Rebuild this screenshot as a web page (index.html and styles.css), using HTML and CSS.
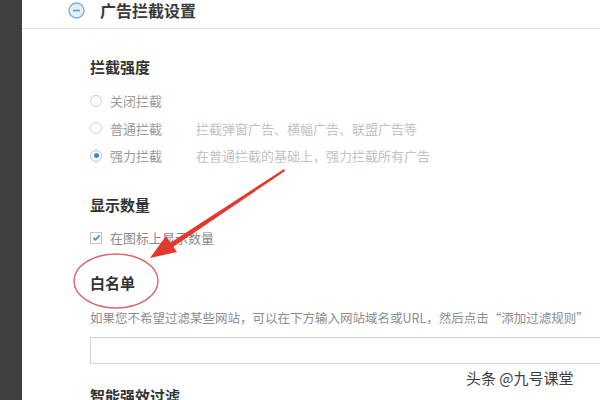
FILE: index.html
```html
<!DOCTYPE html>
<html lang="zh-CN">
<head>
    <meta charset="UTF-8">
    <title>广告拦截设置</title>
    <link rel="stylesheet" href="styles.css">
</head>
<body>
    <div class="page">
        <aside class="sidebar"></aside>

        <main class="panel">
            <header class="panel-header">
                <svg class="collapse-icon" width="17" height="17" viewBox="0 0 17 17">
                    <circle cx="8.5" cy="8.5" r="7.5" fill="#e3eef8" stroke="#7fb0dc" stroke-width="1.4"/>
                    <line x1="5" y1="8.5" x2="12" y2="8.5" stroke="#5f98cc" stroke-width="1.6"/>
                </svg>
                <h1>广告拦截设置</h1>
            </header>

            <section class="settings">
                <h2 class="group-title first">拦截强度</h2>
                <ul class="radio-list">
                    <li class="option">
                        <span class="radio"></span>
                        <span class="option-label">关闭拦截</span>
                    </li>
                    <li class="option">
                        <span class="radio"></span>
                        <span class="option-label">普通拦截</span>
                        <span class="option-desc">拦截弹窗广告、横幅广告、联盟广告等</span>
                    </li>
                    <li class="option">
                        <span class="radio checked"></span>
                        <span class="option-label">强力拦截</span>
                        <span class="option-desc">在普通拦截的基础上，强力拦截所有广告</span>
                    </li>
                </ul>

                <h2 class="group-title">显示数量</h2>
                <div class="check-row">
                    <span class="checkbox">
                        <svg width="9" height="9" viewBox="0 0 9 9">
                            <polyline points="1.5,4.8 3.6,6.8 7.6,2.2" fill="none" stroke="#3d86d6" stroke-width="1.6"/>
                        </svg>
                    </span>
                    <span class="option-label">在图标上显示数量</span>
                </div>

                <h2 class="group-title">白名单</h2>
                <p class="hint">如果您不希望过滤某些网站，可以在下方输入网站域名或URL，然后点击“添加过滤规则”</p>
                <input class="url-input" type="text">

                <h2 class="group-title last">智能强效过滤</h2>
            </section>
        </main>
    </div>

    <svg class="annotation" width="600" height="400" viewBox="0 0 600 400">
        <ellipse cx="116" cy="281" rx="42" ry="27" fill="none" stroke="#d9646a" stroke-width="1.4"/>
        <polygon points="284,169 285,171 173,247 170,243" fill="#e2382e"/>
        <polygon points="150,258 166,236 177,252" fill="#e2382e"/>
    </svg>

    <div class="watermark">头条 @九号课堂</div>
</body>
</html>
```

FILE: styles.css
```css
* {
    margin: 0;
    padding: 0;
    box-sizing: border-box;
}

body {
    width: 600px;
    height: 400px;
    overflow: hidden;
    background: #fff;
    font-family: "Noto Sans CJK SC", "Noto Sans", sans-serif;
    color: #333;
}

.page {
    display: flex;
    height: 400px;
}

/* Dark strip on the left */
.sidebar {
    width: 22px;
    flex-shrink: 0;
    background: #404040;
}

.panel {
    flex: 1;
    overflow: hidden;
}

/* Header */
.panel-header {
    display: flex;
    align-items: center;
    gap: 15px;
    padding: 1px 0 9px 46px;
    border-bottom: 1px solid #e2e2e2;
}

.panel-header h1 {
    font-size: 16px;
    line-height: 18px;
    font-weight: 700;
    color: #3a3a3a;
}

/* Settings body */
.settings {
    padding-left: 68px;
}

.group-title {
    font-size: 15px;
    line-height: 20px;
    font-weight: 700;
    color: #333;
    margin-top: 25px;
}

.group-title.first {
    margin-top: 28px;
}

.group-title.last {
    margin-top: 22px;
}

.radio-list {
    list-style: none;
    margin-top: 10px;
}

.option {
    display: flex;
    align-items: center;
    height: 27.5px;
    font-size: 13px;
}

.radio {
    width: 12px;
    height: 12px;
    border: 1px solid #cfcfcf;
    border-radius: 50%;
    margin-right: 8px;
    display: flex;
    align-items: center;
    justify-content: center;
}

.radio.checked {
    border-color: #a9c8e8;
}

.radio.checked::after {
    content: "";
    width: 5px;
    height: 5px;
    border-radius: 50%;
    background: #3d86d6;
}

.option-label {
    color: #9a9a9a;
}

.option-desc {
    color: #c2c2c2;
    margin-left: 34px;
}

.check-row {
    display: flex;
    align-items: center;
    height: 20px;
    margin-top: 13px;
    font-size: 13px;
}

.checkbox {
    width: 12px;
    height: 12px;
    border: 1px solid #c4c4c4;
    margin-right: 8px;
    display: flex;
    align-items: center;
    justify-content: center;
}

.check-row .option-label {
    color: #8a8a8a;
}

.hint {
    margin-top: 16px;
    font-size: 12.5px;
    line-height: 18px;
    color: #8c8c8c;
    white-space: nowrap;
}

.url-input {
    display: block;
    width: 540px;
    height: 27px;
    margin-top: 10px;
    border: 1px solid #d4d4d4;
    background: #fff;
}

/* Overlays */
.annotation {
    position: absolute;
    left: 0;
    top: 0;
    pointer-events: none;
}

.watermark {
    position: absolute;
    left: 466px;
    top: 367px;
    font-size: 15px;
    line-height: 22px;
    color: #3c3c3c;
    text-shadow: 0 0 3px #fff, 0 0 3px #fff;
}
```
